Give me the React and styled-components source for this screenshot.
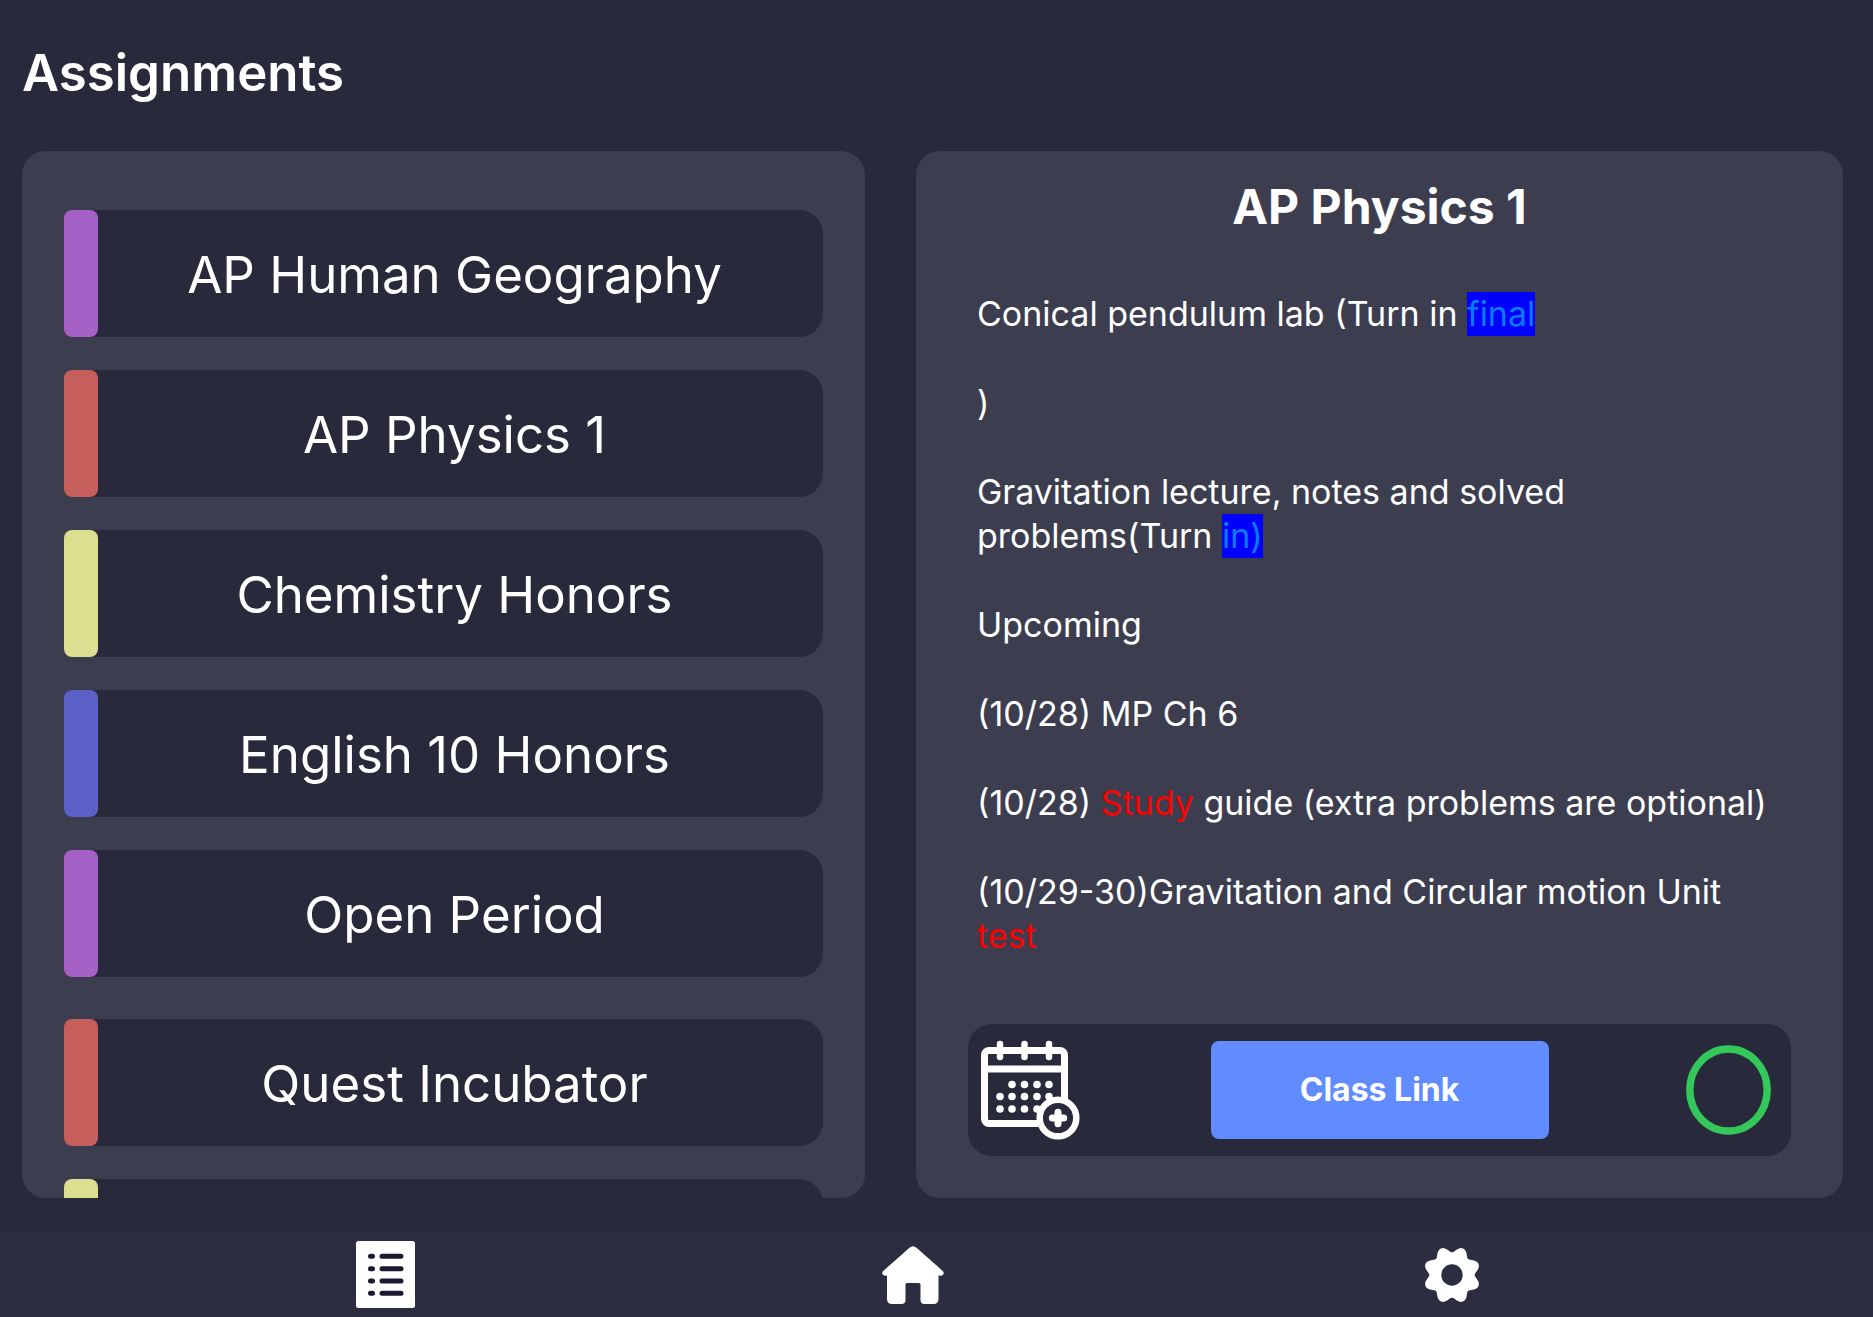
import React from 'react';
import styled, { createGlobalStyle } from 'styled-components';

const GlobalStyle = createGlobalStyle`
  *, *::before, *::after { box-sizing: border-box; }
  body {
    margin: 0;
    background: #28293a;
    color: #ffffff;
    font-family: Inter, "Liberation Sans", sans-serif;
  }
  button { font: inherit; color: inherit; border: 0; padding: 0; background: none; cursor: pointer; }
  h1, h2, p, ul { margin: 0; padding: 0; }
`;

const Screen = styled.div`
  display: flex;
  flex-direction: column;
  height: 100vh;
  overflow: hidden;
`;

const Header = styled.header`
  flex: none;
  padding: 41px 22px 46px;
`;

const Title = styled.h1`
  font-size: 51px;
  line-height: 64px;
  font-weight: 600;
`;

const Columns = styled.main`
  flex: 1;
  min-height: 0;
  display: grid;
  grid-template-columns: 843fr 927fr;
  gap: 51px;
  padding: 0 30px 33px 22px;
`;

const Panel = styled.section`
  min-width: 0;
  min-height: 0;
  display: flex;
  flex-direction: column;
  overflow: hidden;
  border-radius: 24px;
  background: #3c3e50;
`;

const ClassScroller = styled(Panel)`
  gap: 42px;
  padding: 59px 42px 0;
`;

const ClassList = styled.ul`
  flex: none;
  display: flex;
  flex-direction: column;
  gap: 33px;
  list-style: none;
`;

const ClassButton = styled.button`
  display: flex;
  width: 100%;
  height: 127px;
  border-radius: 8px 24px 24px 8px;
  background: #28293a;
`;

const ColorTag = styled.span`
  flex: none;
  width: 34px;
  height: 100%;
  border-radius: 8px;
  background: ${({ $color }) => $color};
`;

const ClassName = styled.span`
  flex: 1;
  align-self: center;
  padding: 2px 12px 0 0;
  font-size: 51px;
  line-height: 64px;
  text-align: center;
`;

const DetailPanel = styled(Panel)`
  padding: 24px 52px 42px;
`;

const DetailTitle = styled.h2`
  font-size: 48px;
  line-height: 64px;
  font-weight: 700;
  text-align: center;
`;

const Notes = styled.div`
  flex: 1;
  display: flex;
  flex-direction: column;
  gap: 45px;
  padding: 53px 8px 0 9px;
  font-size: 34px;
  line-height: 44px;
`;

const TurnInLink = styled.a`
  display: inline-block;
  background: #0000ff;
  color: #0a7aff;
  text-decoration: none;
`;

const Alert = styled.span`
  color: #ff0000;
`;

const ActionBar = styled.div`
  flex: none;
  display: grid;
  grid-template-columns: 1fr 338px 1fr;
  align-items: center;
  height: 132px;
  border-radius: 24px;
  background: #28293a;
`;

const CalendarButton = styled.button`
  justify-self: start;
  display: flex;
  margin-left: 12px;
`;

const LinkButton = styled.button`
  height: 98px;
  border-radius: 8px;
  background: #608cff;
  font-size: 32px;
  line-height: 40px;
  font-weight: 700;
`;

const DoneToggle = styled.button`
  justify-self: end;
  display: flex;
  margin-right: 20px;
`;

const TabBar = styled.nav`
  flex: none;
  display: grid;
  grid-template-columns: 771fr 283fr 796fr;
  place-items: center;
  height: 86px;
  padding-right: 23px;
  border-top: 1px solid #252634;
  background: #2d2d41;
`;

const TabButton = styled.button`
  display: flex;
`;

const CalendarIcon = () => (
  <svg width="100" height="100" viewBox="0 0 100 100" fill="none" stroke="#fff" strokeLinecap="round" aria-hidden="true">
    <rect x="4.5" y="10.5" width="80" height="73" rx="4.5" strokeWidth="7" />
    <path d="M5 29H84" strokeWidth="7" strokeLinecap="butt" />
    <path d="M20 4V17M44.500 4V17M69 4V17" strokeWidth="6.500" />
    <g fill="#fff" stroke="none">
      {[32, 44.5, 57, 69].map((x) => <circle key={`a${x}`} cx={x} cy="44.500" r="3.800" />)}
      {[20, 32, 44.5, 57, 69].map((x) => <circle key={`b${x}`} cx={x} cy="56.500" r="3.800" />)}
      {[20, 32, 44.5, 57].map((x) => <circle key={`c${x}`} cx={x} cy="69" r="3.800" />)}
    </g>
    <circle cx="78" cy="78" r="18.300" fill="#28293a" strokeWidth="6.500" />
    <path d="M72.300 78H83.700M78 72.300V83.700" strokeWidth="7" />
  </svg>
);

const RingIcon = () => (
  <svg width="85" height="90" viewBox="0 0 85 90" fill="none" stroke="#34c759" strokeWidth="7.500" aria-hidden="true">
    <ellipse cx="42.500" cy="45" rx="38.700" ry="41" />
  </svg>
);

const ListIcon = () => (
  <svg width="59" height="67" viewBox="0 0 59 67" aria-hidden="true">
    <rect width="59" height="67" rx="2.500" fill="#fff" />
    <g stroke="#1b1a30" strokeWidth="5" strokeLinecap="round">
      {[15.3, 27.7, 40, 52.3].map((y) => <path key={y} d={`M14.500 ${y}H16.500M26 ${y}H45`} />)}
    </g>
  </svg>
);

const HomeIcon = () => (
  <svg width="62" height="58" viewBox="0 0 62 58" fill="#fff" aria-hidden="true">
    <path d="M27.500 1.800Q31 -1.200 34.500 1.800L60.800 25Q62.500 27 61 28.800Q59.800 30 56.500 29.500V53Q56.500 58 51.500 58H42.500Q38.500 58 38.500 54V38.500Q38.500 37 37 37H25Q23.500 37 23.500 38.500V54Q23.500 58 19.500 58H10Q5 58 5 53V29.500Q2.200 30 1 28.800Q-.5 27 1.200 25Z" />
  </svg>
);

// Outline of an eight-lobed cog, with a notch at each multiple of 45 degrees.
const cogOutline = Array.from({ length: 180 }, (_, i) => {
  const angle = (i * Math.PI) / 90;
  const radius = 25.9 - 3 * Math.cos(8 * angle) - 0.2 * Math.cos(16 * angle);
  const x = 28 + radius * Math.cos(angle);
  const y = 28 + radius * Math.sin(angle);
  return `${x.toFixed(2)} ${y.toFixed(2)}`;
}).join('L');

const GearIcon = () => (
  <svg width="56" height="56" viewBox="0 0 56 56" aria-hidden="true">
    <path fill="#fff" fillRule="evenodd" d={`M${cogOutline}ZM28 17.300A10.700 10.700 0 1 0 28 38.700A10.700 10.700 0 1 0 28 17.300Z`} />
  </svg>
);

const morning = [
  ['AP Human Geography', '#a561c6'],
  ['AP Physics 1', '#c65f5b'],
  ['Chemistry Honors', '#dcde90'],
  ['English 10 Honors', '#5b61c6'],
  ['Open Period', '#a561c6'],
];

const afternoon = [
  ['Quest Incubator', '#c65f5b'],
  ['', '#dcde90'],
];

const Classes = ({ items }) => (
  <ClassList>
    {items.map(([name, color]) => (
      <li key={name}>
        <ClassButton type="button">
          <ColorTag $color={color} />
          <ClassName>{name}</ClassName>
        </ClassButton>
      </li>
    ))}
  </ClassList>
);

export default function App() {
  return (
    <Screen>
      <GlobalStyle />
      <Header>
        <Title>Assignments</Title>
      </Header>
      <Columns>
        <ClassScroller>
          <Classes items={morning} />
          <Classes items={afternoon} />
        </ClassScroller>
        <DetailPanel>
          <DetailTitle>AP Physics 1</DetailTitle>
          <Notes>
            <p>Conical pendulum lab (Turn in <TurnInLink href="#final">final</TurnInLink></p>
            <p>)</p>
            <p>Gravitation lecture, notes and solved problems(Turn <TurnInLink href="#in">in)</TurnInLink></p>
            <p>Upcoming</p>
            <p>(10/28) MP Ch 6</p>
            <p>(10/28) <Alert>Study</Alert> guide (extra problems are optional)</p>
            <p>(10/29-30)Gravitation and Circular motion Unit <Alert>test</Alert></p>
          </Notes>
          <ActionBar>
            <CalendarButton type="button" aria-label="Add to calendar"><CalendarIcon /></CalendarButton>
            <LinkButton type="button">Class Link</LinkButton>
            <DoneToggle type="button" aria-label="Mark as done"><RingIcon /></DoneToggle>
          </ActionBar>
        </DetailPanel>
      </Columns>
      <TabBar>
        <TabButton type="button" aria-label="Assignments"><ListIcon /></TabButton>
        <TabButton type="button" aria-label="Home"><HomeIcon /></TabButton>
        <TabButton type="button" aria-label="Settings"><GearIcon /></TabButton>
      </TabBar>
    </Screen>
  );
}
